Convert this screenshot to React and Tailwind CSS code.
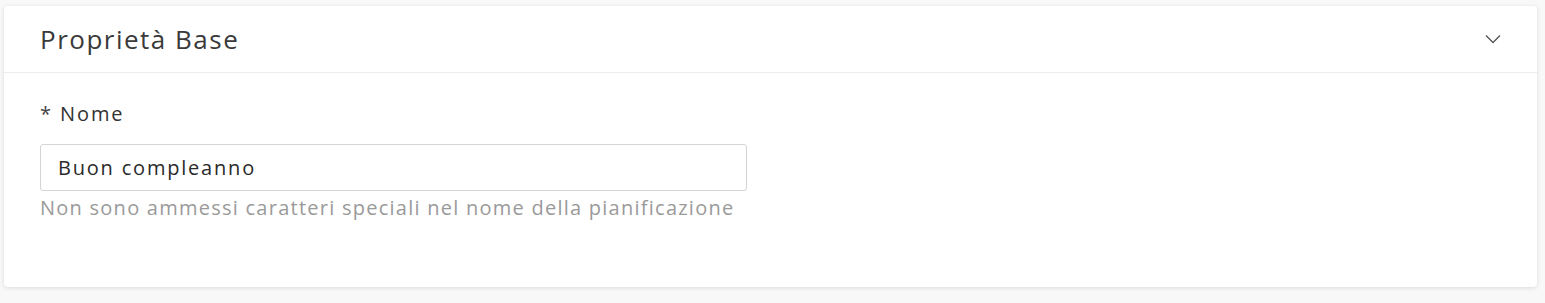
import React from "react";

const font = { fontFamily: '"Open Sans", "Liberation Sans", sans-serif' };

const Chevron = () => (
  <svg width="16" height="10" viewBox="0 0 16 10" fill="none">
    <path d="M1 1.5 L8 8.5 L15 1.5" stroke="#555" strokeWidth="1.3" />
  </svg>
);

export default function App() {
  return (
    <div className="min-h-screen bg-[#f8f8f8] pl-1 pr-2 pt-1.5 pb-4" style={font}>
      <div className="bg-white rounded shadow-[0_1px_4px_rgba(0,0,0,0.12)]">
        <div className="flex items-center justify-between h-[67px] pl-9 pr-9 border-b border-[#ececec]">
          <h2 className="text-[26px] font-normal text-[#3a3a3a] tracking-[1.5px]">Proprietà Base</h2>
          <Chevron />
        </div>
        <div className="pl-9 pt-[28px] pb-[62px]">
          <label className="block text-[20px] text-[#333] leading-[26px] tracking-[1.9px]">
            <span className="text-[#444]">*</span> Nome
          </label>
          <div className="mt-[17px] w-[707px] h-[47px] border border-[#d4d4d4] rounded-[3px] flex items-center px-[17px] text-[20px] text-[#2a2a2a] tracking-[1.8px]">
            Buon compleanno
          </div>
          <p className="text-[20px] text-[#9a9a9a] leading-[34px] tracking-[1.25px]">
            Non sono ammessi caratteri speciali nel nome della pianificazione
          </p>
        </div>
      </div>
    </div>
  );
}
